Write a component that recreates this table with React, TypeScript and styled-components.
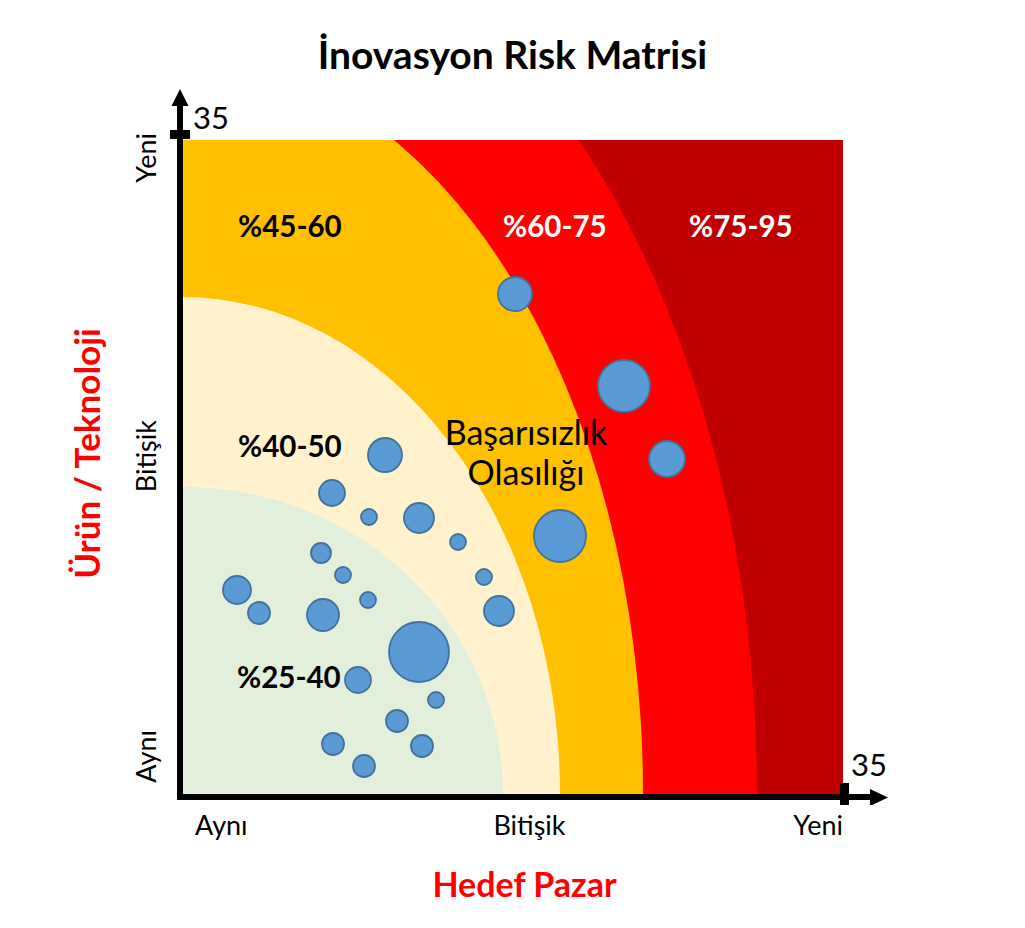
import React from "react";
import styled, { createGlobalStyle } from "styled-components";

const GlobalStyle = createGlobalStyle`
  html, body {
    margin: 0;
    padding: 0;
    background: #ffffff;
  }
  body {
    font-family: Lato, "Open Sans", "Liberation Sans", sans-serif;
    color: #000000;
  }
`;

// plot area in page coordinates
const PLOT = { left: 183, top: 140, right: 843, bottom: 794 };

const BANDS = [
  { color: "#ff0000", rx: 574, ry: 903 },
  { color: "#ffc000", rx: 460, ry: 736 },
  { color: "#fff2cc", rx: 377, ry: 497 },
  { color: "#e2efda", rx: 320, ry: 307 },
];

const BUBBLES: [number, number, number][] = [
  [515, 294, 17],
  [624, 386, 26],
  [667, 459, 18],
  [560, 536, 26],
  [385, 455, 17],
  [332, 493, 13],
  [369, 517, 8],
  [419, 518, 15],
  [458, 542, 8],
  [321, 553, 10],
  [343, 575, 8],
  [484, 577, 8],
  [237, 590, 14],
  [259, 613, 11],
  [368, 600, 8],
  [323, 615, 16],
  [499, 611, 15],
  [419, 652, 30],
  [358, 680, 13],
  [436, 700, 8],
  [397, 721, 11],
  [333, 744, 11],
  [422, 746, 11],
  [364, 766, 11],
];

const Page = styled.div`
  width: 1025px;
  height: 928px;
  display: flex;
  flex-direction: column;
`;

const Title = styled.h1`
  box-sizing: border-box;
  height: 85px;
  margin: 0;
  padding-top: 35px;
  text-align: center;
  font-size: 39px;
  font-weight: 700;
  line-height: 39px;
`;

const ChartRow = styled.div`
  display: flex;
  height: 720px;
`;

const YTitleCol = styled.div`
  box-sizing: border-box;
  width: 48px;
  margin-left: 62px;
  padding-top: 16px;
  display: flex;
  align-items: center;
  justify-content: center;
`;

const YTitle = styled.div`
  writing-mode: vertical-rl;
  transform: rotate(180deg);
  white-space: nowrap;
  color: #ff0000;
  font-size: 35px;
  font-weight: 700;
  line-height: 1;
`;

const YTickCol = styled.div`
  box-sizing: border-box;
  width: 50px;
  margin-left: 10px;
  padding: 48px 0 22px;
  display: flex;
  flex-direction: column;
  justify-content: space-between;
  align-items: center;
`;

const Tick = styled.span<{ $vertical?: boolean }>`
  font-size: 27px;
  line-height: 1;
  white-space: nowrap;
  ${({ $vertical }) =>
    $vertical &&
    `
    writing-mode: vertical-rl;
    transform: rotate(180deg);
  `}
`;

const Chart = styled.svg`
  display: block;
  width: 725px;
  height: 720px;
`;

const BandLabel = styled.text<{ $light?: boolean }>`
  font-family: Lato, "Open Sans", sans-serif;
  font-size: 29.5px;
  font-weight: 700;
  fill: ${({ $light }) => ($light ? "#ffffff" : "#000000")};
`;

const CenterLabel = styled.text`
  font-family: Lato, "Open Sans", sans-serif;
  font-size: 34px;
  font-weight: 400;
  fill: #000000;
`;

const EndLabel = styled.text`
  font-family: Lato, "Open Sans", sans-serif;
  font-size: 31px;
  fill: #000000;
`;

const XTickRow = styled.div`
  display: flex;
  justify-content: space-between;
  align-items: flex-start;
  width: 648px;
  margin-left: 195px;
  padding-top: 6px;
`;

const MidTick = styled(Tick)`
  margin-left: 18px;
`;

const XTitle = styled.div`
  margin-top: 29px;
  margin-left: 24px;
  text-align: center;
  color: #ff0000;
  font-size: 34px;
  font-weight: 700;
  line-height: 1;
`;

function RiskChart() {
  const cx = PLOT.left;
  const cy = PLOT.bottom;
  return (
    <Chart viewBox="170 85 725 720">
      <defs>
        <clipPath id="plot">
          <rect
            x={PLOT.left}
            y={PLOT.top}
            width={PLOT.right - PLOT.left}
            height={PLOT.bottom - PLOT.top}
          />
        </clipPath>
      </defs>
      <g clipPath="url(#plot)">
        <rect
          x={PLOT.left}
          y={PLOT.top}
          width={PLOT.right - PLOT.left}
          height={PLOT.bottom - PLOT.top}
          fill="#c00000"
        />
        {BANDS.map((b) => (
          <ellipse key={b.color} cx={cx} cy={cy} rx={b.rx} ry={b.ry} fill={b.color} />
        ))}
      </g>

      <BandLabel x={238} y={237}>%45-60</BandLabel>
      <BandLabel x={503} y={237} $light>
        %60-75
      </BandLabel>
      <BandLabel x={689} y={237} $light>
        %75-95
      </BandLabel>
      <BandLabel x={238} y={457}>%40-50</BandLabel>
      <BandLabel x={237} y={688}>%25-40</BandLabel>

      <CenterLabel x={526} y={445} textAnchor="middle">
        Başarısızlık
      </CenterLabel>
      <CenterLabel x={526} y={485} textAnchor="middle">
        Olasılığı
      </CenterLabel>

      {BUBBLES.map(([x, y, r], i) => (
        <circle key={i} cx={x} cy={y} r={r} fill="#5b9bd5" stroke="#41719c" strokeWidth={1.8} />
      ))}

      {/* y axis */}
      <rect x={177} y={104} width={6} height={696} fill="#000" />
      <polygon points="171.5,106 188.5,106 180,89" fill="#000" />
      <rect x={167} y={130} width={23} height={9} fill="#000" />
      <EndLabel x={193} y={129}>35</EndLabel>

      {/* x axis */}
      <rect x={177} y={794} width={695} height={6} fill="#000" />
      <polygon points="870,789 870,806 888,797.5" fill="#000" />
      <rect x={840} y={783} width={9} height={22} fill="#000" />
      <EndLabel x={851} y={776}>35</EndLabel>
    </Chart>
  );
}

export default function App() {
  return (
    <>
      <GlobalStyle />
      <Page>
        <Title>İnovasyon Risk Matrisi</Title>
        <ChartRow>
          <YTitleCol>
            <YTitle>Ürün / Teknoloji</YTitle>
          </YTitleCol>
          <YTickCol>
            <Tick $vertical>Yeni</Tick>
            <Tick $vertical>Bitişik</Tick>
            <Tick $vertical>Aynı</Tick>
          </YTickCol>
          <RiskChart />
        </ChartRow>
        <XTickRow>
          <Tick>Aynı</Tick>
          <MidTick>Bitişik</MidTick>
          <Tick>Yeni</Tick>
        </XTickRow>
        <XTitle>Hedef Pazar</XTitle>
      </Page>
    </>
  );
}
